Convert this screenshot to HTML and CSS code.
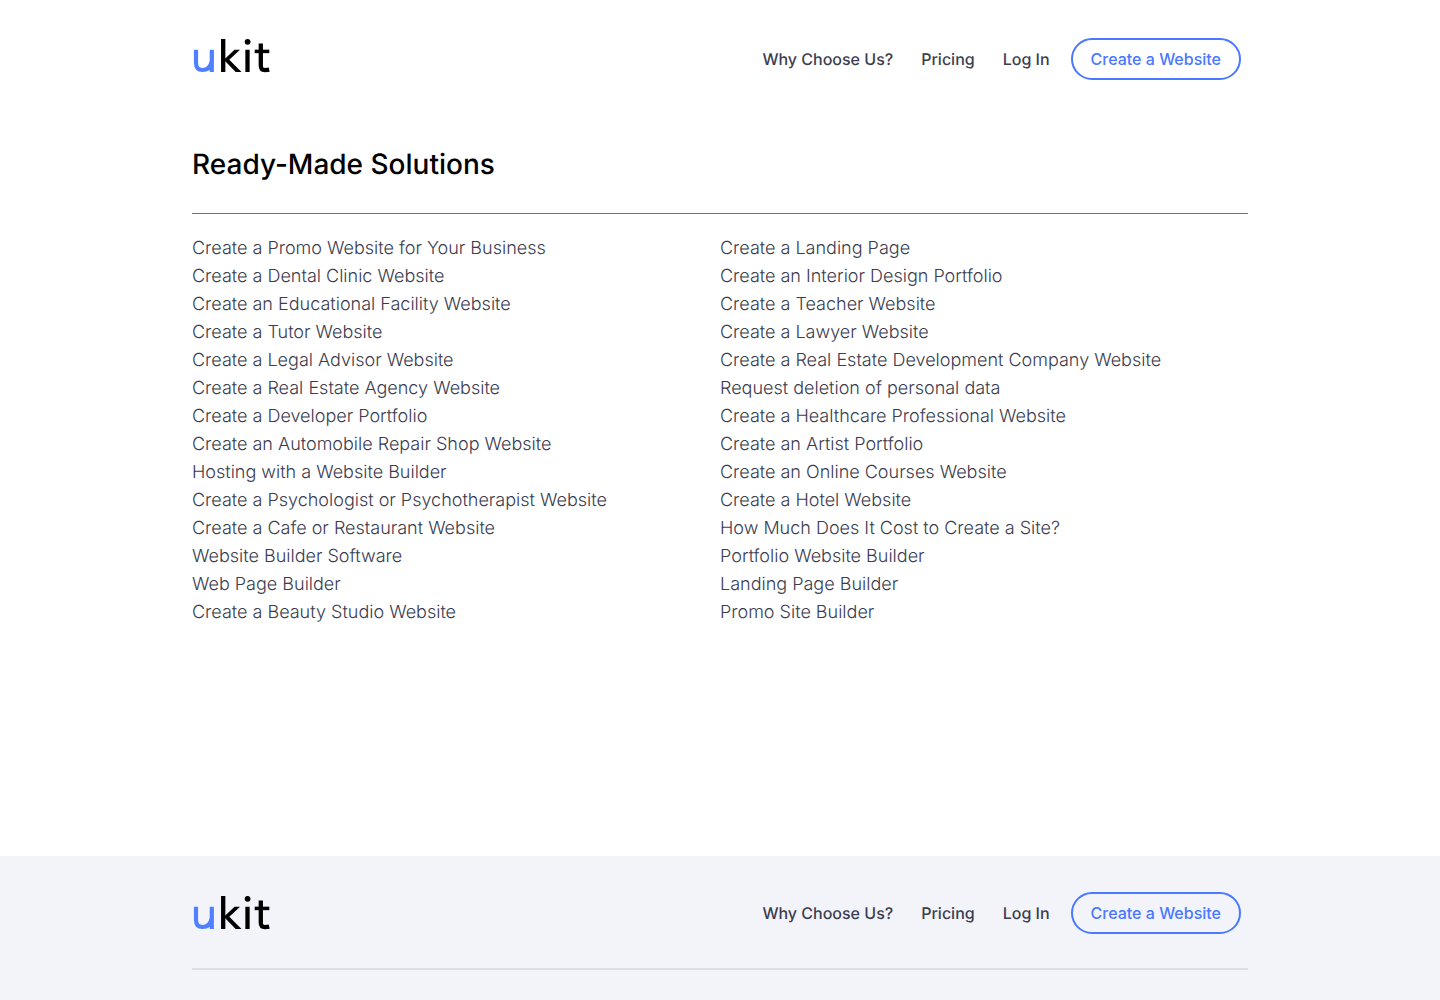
FILE: index.html
```html
<!DOCTYPE html>
<html lang="en">
<head>
<meta charset="utf-8">
<meta name="viewport" content="width=device-width, initial-scale=1">
<title>Ready-Made Solutions – uKit</title>
<link rel="stylesheet" href="styles.css">
</head>
<body>
<svg class="sprite" aria-hidden="true">
  <symbol id="logo" viewBox="0 0 80 40">
    <g fill="none" stroke="#000" stroke-width="4.300">
      <path stroke="#5080ff" stroke-width="4.200" d="M4 13.700v12.800c0 5 1.700 7.500 6.500 7.500 5 0 8-3.300 9-8.200M19.800 13.700V36"/>
      <path d="M31.200 2.900V36M55.500 13.700V36M68.800 7.500v22c0 3.300 1.200 4.600 4.200 4.600 1.700 0 3-.1 4.200-.4"/>
      <path stroke-width="3.500" d="M62.700 15.400h14.600"/>
    </g>
    <path d="M33 22.800L42.500 13.700H48L37.300 23.700L49.500 36H43.700L33 25z"/>
    <circle cx="55.600" cy="5.800" r="2.900"/>
  </symbol>
</svg>
<header class="header">
  <div class="container bar">
    <a class="logo" href="#" aria-label="ukit"><svg width="80" height="40" aria-hidden="true"><use href="#logo"/></svg></a>
    <nav class="nav" aria-label="Main">
      <a class="nav-link" href="#">Why Choose Us?</a>
      <a class="nav-link" href="#">Pricing</a>
      <a class="nav-link" href="#">Log In</a>
      <button class="cta" type="button">Create a Website</button>
    </nav>
  </div>
</header>
<main class="container main">
  <h1 class="title">Ready-Made Solutions</h1>
  <div class="solutions">
    <ul class="list">
      <li><a href="#">Create a Promo Website for Your Business</a></li>
      <li><a href="#">Create a Dental Clinic Website</a></li>
      <li><a href="#">Create an Educational Facility Website</a></li>
      <li><a href="#">Create a Tutor Website</a></li>
      <li><a href="#">Create a Legal Advisor Website</a></li>
      <li><a href="#">Create a Real Estate Agency Website</a></li>
      <li><a href="#">Create a Developer Portfolio</a></li>
      <li><a href="#">Create an Automobile Repair Shop Website</a></li>
      <li><a href="#">Hosting with a Website Builder</a></li>
      <li><a href="#">Create a Psychologist or Psychotherapist Website</a></li>
      <li><a href="#">Create a Cafe or Restaurant Website</a></li>
      <li><a href="#">Website Builder Software</a></li>
      <li><a href="#">Web Page Builder</a></li>
      <li><a href="#">Create a Beauty Studio Website</a></li>
    </ul>
    <ul class="list">
      <li><a href="#">Create a Landing Page</a></li>
      <li><a href="#">Create an Interior Design Portfolio</a></li>
      <li><a href="#">Create a Teacher Website</a></li>
      <li><a href="#">Create a Lawyer Website</a></li>
      <li><a href="#">Create a Real Estate Development Company Website</a></li>
      <li><a href="#">Request deletion of personal data</a></li>
      <li><a href="#">Create a Healthcare Professional Website</a></li>
      <li><a href="#">Create an Artist Portfolio</a></li>
      <li><a href="#">Create an Online Courses Website</a></li>
      <li><a href="#">Create a Hotel Website</a></li>
      <li><a href="#">How Much Does It Cost to Create a Site?</a></li>
      <li><a href="#">Portfolio Website Builder</a></li>
      <li><a href="#">Landing Page Builder</a></li>
      <li><a href="#">Promo Site Builder</a></li>
    </ul>
  </div>
</main>
<footer class="footer">
  <div class="container">
    <div class="bar footer-bar">
      <a class="logo" href="#" aria-label="ukit"><svg width="80" height="40" aria-hidden="true"><use href="#logo"/></svg></a>
      <nav class="nav" aria-label="Footer">
        <a class="nav-link" href="#">Why Choose Us?</a>
        <a class="nav-link" href="#">Pricing</a>
        <a class="nav-link" href="#">Log In</a>
        <button class="cta" type="button">Create a Website</button>
      </nav>
    </div>
  </div>
</footer>
</body>
</html>
```
FILE: styles.css
```css
* { box-sizing: border-box; }
body { margin: 0; min-height: 100vh; display: flex; flex-direction: column; background: #fff; color: #3b3d50; font-family: Inter, "Liberation Sans", sans-serif; text-rendering: geometricPrecision; }
a { color: inherit; text-decoration: none; }
.sprite { display: none; }
.container { width: 100%; max-width: 1104px; margin: 0 auto; padding: 0 24px; }
.header { padding: 36px 0; }
.bar { display: flex; align-items: flex-start; justify-content: space-between; }
.logo, .logo svg { display: block; }
.nav { display: flex; align-items: center; gap: 28px; padding: 2px 7px 2px 0; font-size: 16px; font-weight: 500; line-height: 24px; }
.cta { height: 42px; margin-left: -7px; padding: 0 18px; border: 2px solid #4a78ff; border-radius: 21px; background: transparent; color: #4a78ff; font: inherit; cursor: pointer; }
.main { flex: 1 0 auto; padding-top: 28px; padding-bottom: 229px; }
.title { margin: 0; padding-bottom: 31px; border-bottom: 1px solid #6c6f7d; color: #000; font-size: 28px; font-weight: 500; line-height: 36px; }
.solutions { display: grid; grid-template-columns: 1fr 1fr; padding-top: 21px; }
.list { margin: 0; padding: 0; list-style: none; font-size: 18px; font-weight: 300; line-height: 28px; }
.footer { padding: 34px 0 30px; background: #f3f4f9; }
.footer-bar { align-items: center; padding-bottom: 32px; border-bottom: 2px solid #dcdee3; }
```
